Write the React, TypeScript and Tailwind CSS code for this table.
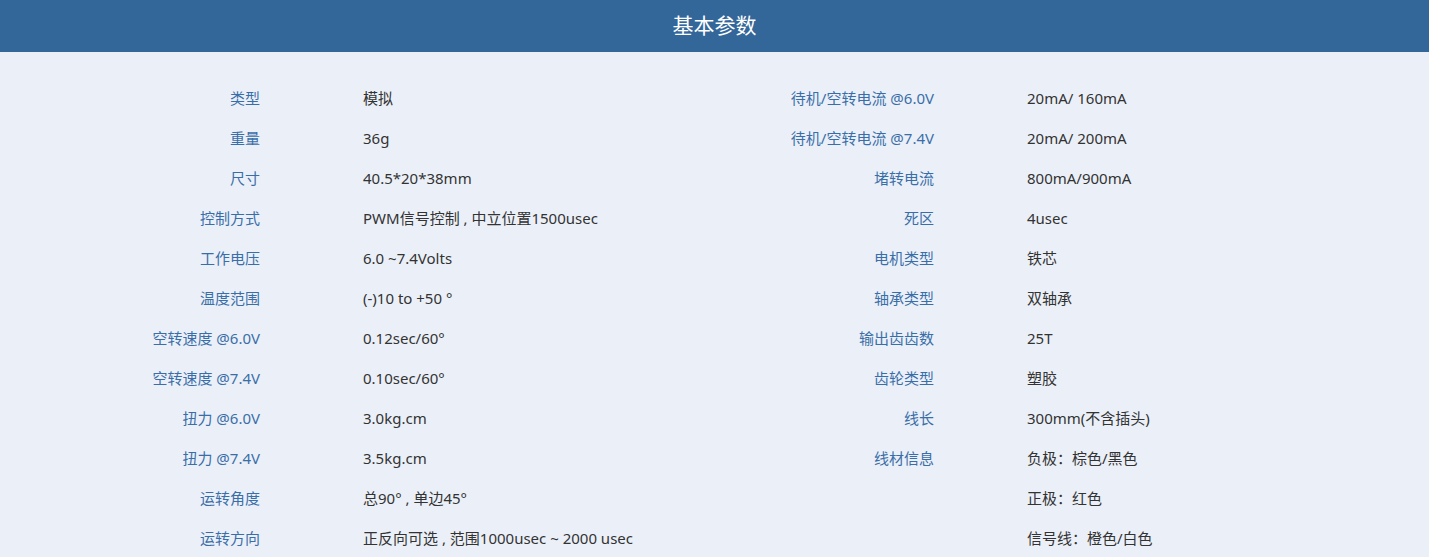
const left: [string, string][] = [
  ["类型", "模拟"],
  ["重量", "36g"],
  ["尺寸", "40.5*20*38mm"],
  ["控制方式", "PWM信号控制 , 中立位置1500usec"],
  ["工作电压", "6.0 ~7.4Volts"],
  ["温度范围", "(-)10 to +50 °"],
  ["空转速度 @6.0V", "0.12sec/60°"],
  ["空转速度 @7.4V", "0.10sec/60°"],
  ["扭力 @6.0V", "3.0kg.cm"],
  ["扭力 @7.4V", "3.5kg.cm"],
  ["运转角度", "总90° , 单边45°"],
  ["运转方向", "正反向可选 , 范围1000usec ~ 2000 usec"],
];

const right: [string, string][] = [
  ["待机/空转电流 @6.0V", "20mA/ 160mA"],
  ["待机/空转电流 @7.4V", "20mA/ 200mA"],
  ["堵转电流", "800mA/900mA"],
  ["死区", "4usec"],
  ["电机类型", "铁芯"],
  ["轴承类型", "双轴承"],
  ["输出齿齿数", "25T"],
  ["齿轮类型", "塑胶"],
  ["线长", "300mm(不含插头)"],
  ["线材信息", "负极：棕色/黑色"],
  ["", "正极：红色"],
  ["", "信号线：橙色/白色"],
];

function Column({ rows, gap }: { rows: [string, string][]; gap: string }) {
  return (
    <div className={`grid grid-cols-[220px_1fr] ${gap}`}>
      {rows.map(([label, value], i) => (
        <div key={i} className="contents">
          <div className="h-10 flex items-center justify-end text-[#3a6ea8]">{label}</div>
          <div className="h-10 flex items-center text-[#333333]">{value}</div>
        </div>
      ))}
    </div>
  );
}

export default function App() {
  return (
    <div
      className="min-h-[557px] bg-[#ebf0f8] text-[15px]"
      style={{ fontFamily: '"Noto Sans", "Noto Sans CJK SC", sans-serif' }}
    >
      <div className="h-[52px] bg-[#336699] flex items-center justify-center text-white text-[21px]">
        基本参数
      </div>
      <div className="grid grid-cols-[674px_674px] px-[40px] pt-[26px]">
        <Column rows={left} gap="gap-x-[103px]" />
        <Column rows={right} gap="gap-x-[93px]" />
      </div>
    </div>
  );
}
